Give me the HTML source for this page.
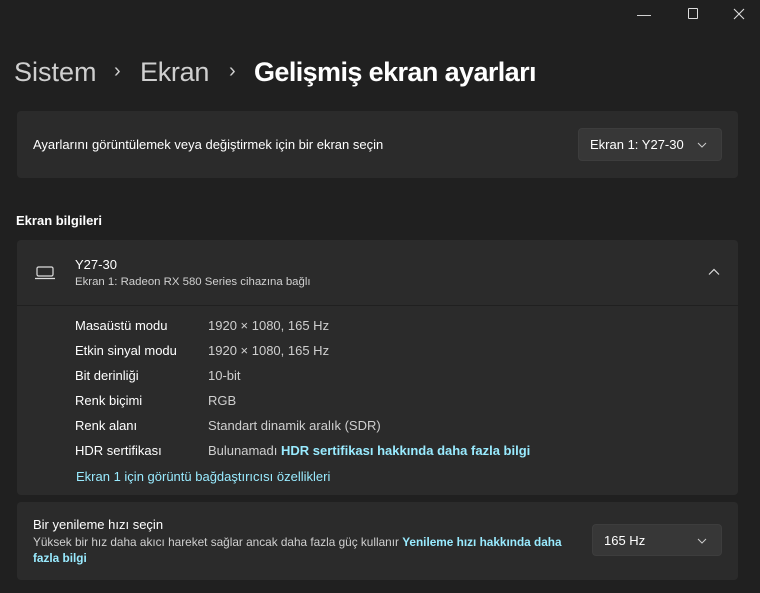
<!DOCTYPE html>
<html><head><meta charset="utf-8"><style>
*{margin:0;padding:0;box-sizing:border-box}
body{width:760px;height:593px;background:#202020;font-family:"Segoe UI","Liberation Sans",sans-serif;color:#fff;position:relative;overflow:hidden}
.a{position:absolute;white-space:nowrap}
.card{position:absolute;left:17px;width:721px;background:#2b2b2b;border-radius:4px}
.t{font-size:13px}
.g{color:#cfcfcf}
.s{font-size:11.5px;color:#d0d0d0}
.l{color:#99ebff}
.dd{position:absolute;background:#373737;border-radius:4px;border:1px solid #3d3d3d}
</style></head><body>
<div class="a" style="left:637px;top:6px;font-size:14px;color:#ddd">&#8212;</div>
<div class="a" style="left:688px;top:8px;width:10px;height:11px;border:1px solid #ddd;border-radius:1px"></div>
<svg class="a" style="left:733px;top:8px" width="12" height="12"><path d="M1 1L11 11M11 1L1 11" stroke="#ddd" stroke-width="1.1"/></svg>

<div class="a" style="left:14px;top:57px;font-size:27px;color:#cfcfcf;letter-spacing:0px">Sistem</div>
<div class="a" style="left:114px;top:60px;font-size:20px;color:#cfcfcf">›</div>
<div class="a" style="left:140px;top:57px;font-size:27px;color:#cfcfcf;letter-spacing:-0.3px">Ekran</div>
<div class="a" style="left:229px;top:60px;font-size:20px;color:#cfcfcf">›</div>
<div class="a" style="left:254px;top:57px;font-size:27px;font-weight:bold;letter-spacing:-0.6px">Gelişmiş ekran ayarları</div>

<div class="card" style="top:111px;height:67px"></div>
<div class="a t" style="left:33px;top:137px">Ayarlarını görüntülemek veya değiştirmek için bir ekran seçin</div>
<div class="dd" style="left:578px;top:128px;width:144px;height:33px"></div>
<div class="a t" style="left:590px;top:137px">Ekran 1: Y27-30</div>
<svg class="a" style="left:697px;top:142px" width="10" height="6"><path d="M1 1L5 5L9 1" stroke="#ccc" fill="none"/></svg>

<div class="a t" style="left:16px;top:213px;font-weight:bold">Ekran bilgileri</div>

<div class="card" style="top:240px;height:65px;border-radius:4px 4px 0 0"></div>
<svg class="a" style="left:35px;top:266px" width="20" height="14"><rect x="2" y="1" width="16" height="9" rx="1.5" fill="none" stroke="#ddd" stroke-width="1.2"/><path d="M0 12.5H20" stroke="#ddd" stroke-width="1.2"/></svg>
<div class="a t" style="left:75px;top:257px">Y27-30</div>
<div class="a s" style="left:75px;top:276px;font-size:11.4px">Ekran 1: Radeon RX 580 Series cihazına bağlı</div>
<svg class="a" style="left:708px;top:268px" width="12" height="8"><path d="M1 6.5L6 1.5L11 6.5" stroke="#ddd" fill="none" stroke-width="1.2"/></svg>

<div class="card" style="top:306px;height:189px;border-radius:0 0 4px 4px"></div>
<div class="a t" style="left:75px;top:318px">Masaüstü modu</div><div class="a t g" style="left:208px;top:318px">1920 × 1080, 165 Hz</div>
<div class="a t" style="left:75px;top:343px">Etkin sinyal modu</div><div class="a t g" style="left:208px;top:343px">1920 × 1080, 165 Hz</div>
<div class="a t" style="left:75px;top:368px">Bit derinliği</div><div class="a t g" style="left:208px;top:368px">10-bit</div>
<div class="a t" style="left:75px;top:393px">Renk biçimi</div><div class="a t g" style="left:208px;top:393px">RGB</div>
<div class="a t" style="left:75px;top:418px">Renk alanı</div><div class="a t g" style="left:208px;top:418px">Standart dinamik aralık (SDR)</div>
<div class="a t" style="left:75px;top:443px">HDR sertifikası</div><div class="a t" style="left:208px;top:443px"><span class="g">Bulunamadı</span> <b class="l">HDR sertifikası hakkında daha fazla bilgi</b></div>
<div class="a t l" style="left:76px;top:469px">Ekran 1 için görüntü bağdaştırıcısı özellikleri</div>

<div class="card" style="top:502px;height:78px"></div>
<div class="a t" style="left:33px;top:517px">Bir yenileme hızı seçin</div>
<div class="a s" style="left:33px;top:535px;font-size:11.8px">Yüksek bir hız daha akıcı hareket sağlar ancak daha fazla güç kullanır <b class="l">Yenileme hızı hakkında daha</b></div>
<div class="a s" style="left:33px;top:551px;font-size:11.8px"><b class="l">fazla bilgi</b></div>
<div class="dd" style="left:592px;top:524px;width:130px;height:32px"></div>
<div class="a t" style="left:604px;top:533px">165 Hz</div>
<svg class="a" style="left:697px;top:538px" width="10" height="6"><path d="M1 1L5 5L9 1" stroke="#ccc" fill="none"/></svg>
</body></html>
